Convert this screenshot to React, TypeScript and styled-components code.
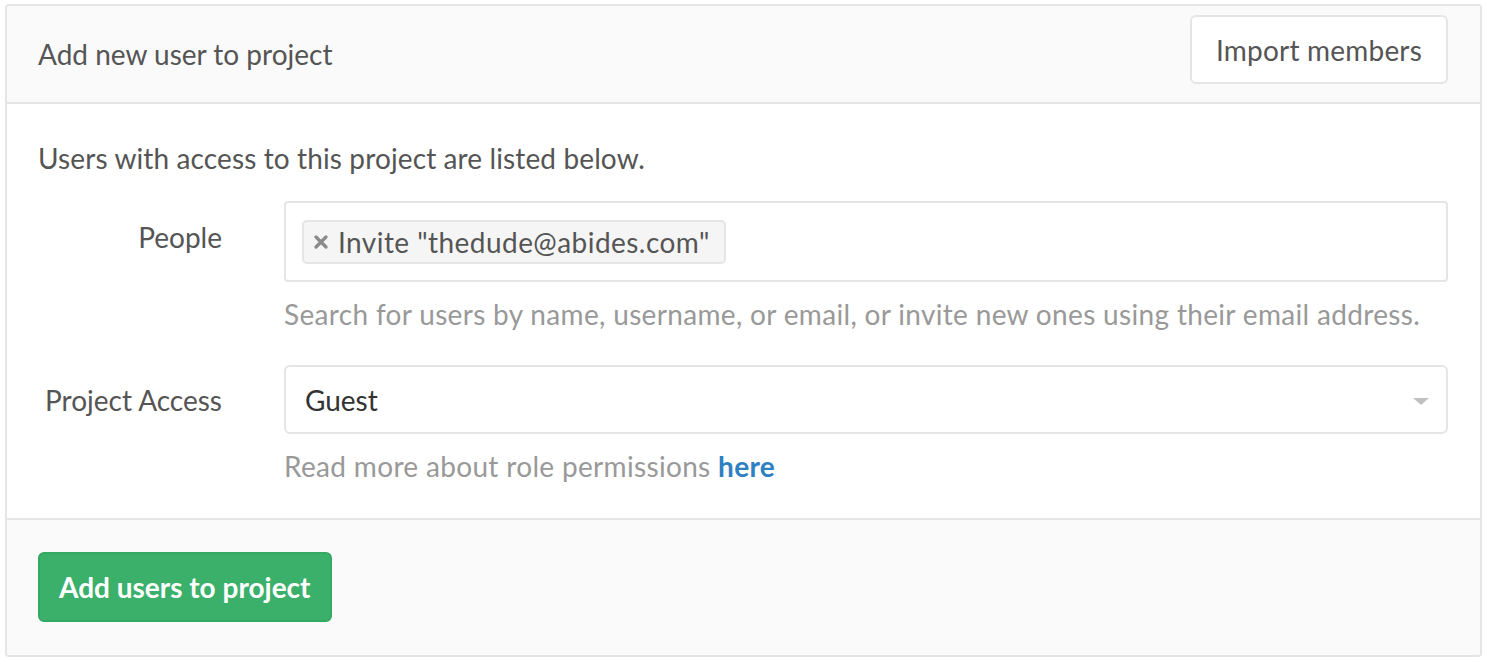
import React from "react";
import styled, { createGlobalStyle } from "styled-components";

const Global = createGlobalStyle`
  html, body { margin: 0; padding: 0; background: #fff; }
  body { font-family: "Lato", "Open Sans", sans-serif; color: #555; }
  * { box-sizing: border-box; }
`;

const Page = styled.div`
  padding: 4px 4px 0 5px;
  width: 1486px;
`;

const Panel = styled.div`
  width: 1477px;
  border: 2px solid #e5e5e5;
  border-radius: 4px;
  overflow: hidden;
`;

const Header = styled.div`
  height: 98px;
  background: #fafafa;
  border-bottom: 2px solid #e5e5e5;
  display: flex;
  align-items: center;
  justify-content: space-between;
  padding: 0 32px 0 31px;
`;

const Title = styled.div`
  font-size: 28px;
  line-height: 36px;
  color: #555;
`;

const DefaultButton = styled.button`
  font-family: inherit;
  align-self: flex-start;
  margin-top: 9px;
  height: 69px;
  padding: 0 24px;
  background: #fff;
  border: 2px solid #e5e5e5;
  border-radius: 6px;
  font-size: 28px;
  letter-spacing: 0.2px;
  color: #555;
`;

const Body = styled.div`
  background: #fff;
  padding: 36px 32px 34px 31px;
  border-bottom: 2px solid #e5e5e5;
`;

const Intro = styled.p`
  margin: 0 0 25px;
  font-size: 28px;
  line-height: 36px;
  letter-spacing: 0.12px;
  color: #555;
`;

const FormRow = styled.div<{ $gap?: number }>`
  display: grid;
  grid-template-columns: 184px 1fr;
  column-gap: 62px;
  margin-bottom: ${(p) => p.$gap ?? 0}px;
`;

const Label = styled.label<{ $top: number }>`
  text-align: right;
  font-size: 28px;
  line-height: 36px;
  color: #555;
  padding-top: ${(p) => p.$top}px;
  white-space: nowrap;
`;

const Field = styled.div``;

const TokenBox = styled.div`
  height: 81px;
  border: 2px solid #e5e5e5;
  border-radius: 4px;
  padding: 17px 16px;
  display: flex;
  align-items: flex-start;
`;

const Token = styled.span`
  display: inline-flex;
  align-items: center;
  height: 44px;
  padding: 0 14px 0 10px;
  background: #f5f5f5;
  border: 2px solid #e5e5e5;
  border-radius: 5px;
  font-size: 28px;
  letter-spacing: 0.45px;
  color: #555;
  gap: 10px;
`;

const Hint = styled.p`
  margin: 14px 0 0;
  font-size: 28px;
  line-height: 36px;
  color: #999;
  letter-spacing: 0.33px;
`;

const Link = styled.a`
  color: #2f80c2;
  font-weight: 700;
  text-decoration: none;
`;

const Select = styled.div`
  height: 69px;
  border: 2px solid #e5e5e5;
  border-radius: 6px;
  display: flex;
  align-items: center;
  justify-content: space-between;
  padding: 0 17px 0 19px;
  font-size: 28px;
  color: #333;
`;

const Caret = styled.span`
  width: 0;
  height: 0;
  border-left: 8px solid transparent;
  border-right: 8px solid transparent;
  border-top: 7px solid #c0c0c0;
  margin-top: 4px;
`;

const Footer = styled.div`
  background: #fafafa;
  padding: 32px 31px;
  height: 135px;
`;

const PrimaryButton = styled.button`
  font-family: inherit;
  height: 70px;
  padding: 0 19px;
  background: #3ab06a;
  border: 2px solid #35a863;
  border-radius: 6px;
  color: #fff;
  font-size: 28px;
  font-weight: 700;
`;

const CloseIcon = () => (
  <svg width="14" height="14" viewBox="0 0 14 14" aria-hidden="true">
    <path d="M2 2 L12 12 M12 2 L2 12" stroke="#8a8a8a" strokeWidth="3.2" strokeLinecap="round" />
  </svg>
);

export default function App() {
  return (
    <>
      <Global />
      <Page>
        <Panel>
          <Header>
            <Title>Add new user to project</Title>
            <DefaultButton>Import members</DefaultButton>
          </Header>
          <Body>
            <Intro>Users with access to this project are listed below.</Intro>
            <FormRow $gap={33}>
              <Label $top={18}>People</Label>
              <Field>
                <TokenBox>
                  <Token>
                    <CloseIcon />
                    Invite "thedude@abides.com"
                  </Token>
                </TokenBox>
                <Hint>
                  Search for users by name, username, or email, or invite new ones using their email address.
                </Hint>
              </Field>
            </FormRow>
            <FormRow>
              <Label $top={17}>Project Access</Label>
              <Field>
                <Select>
                  <span>Guest</span>
                  <Caret />
                </Select>
                <Hint>
                  Read more about role permissions <Link href="#">here</Link>
                </Hint>
              </Field>
            </FormRow>
          </Body>
          <Footer>
            <PrimaryButton>Add users to project</PrimaryButton>
          </Footer>
        </Panel>
      </Page>
    </>
  );
}
